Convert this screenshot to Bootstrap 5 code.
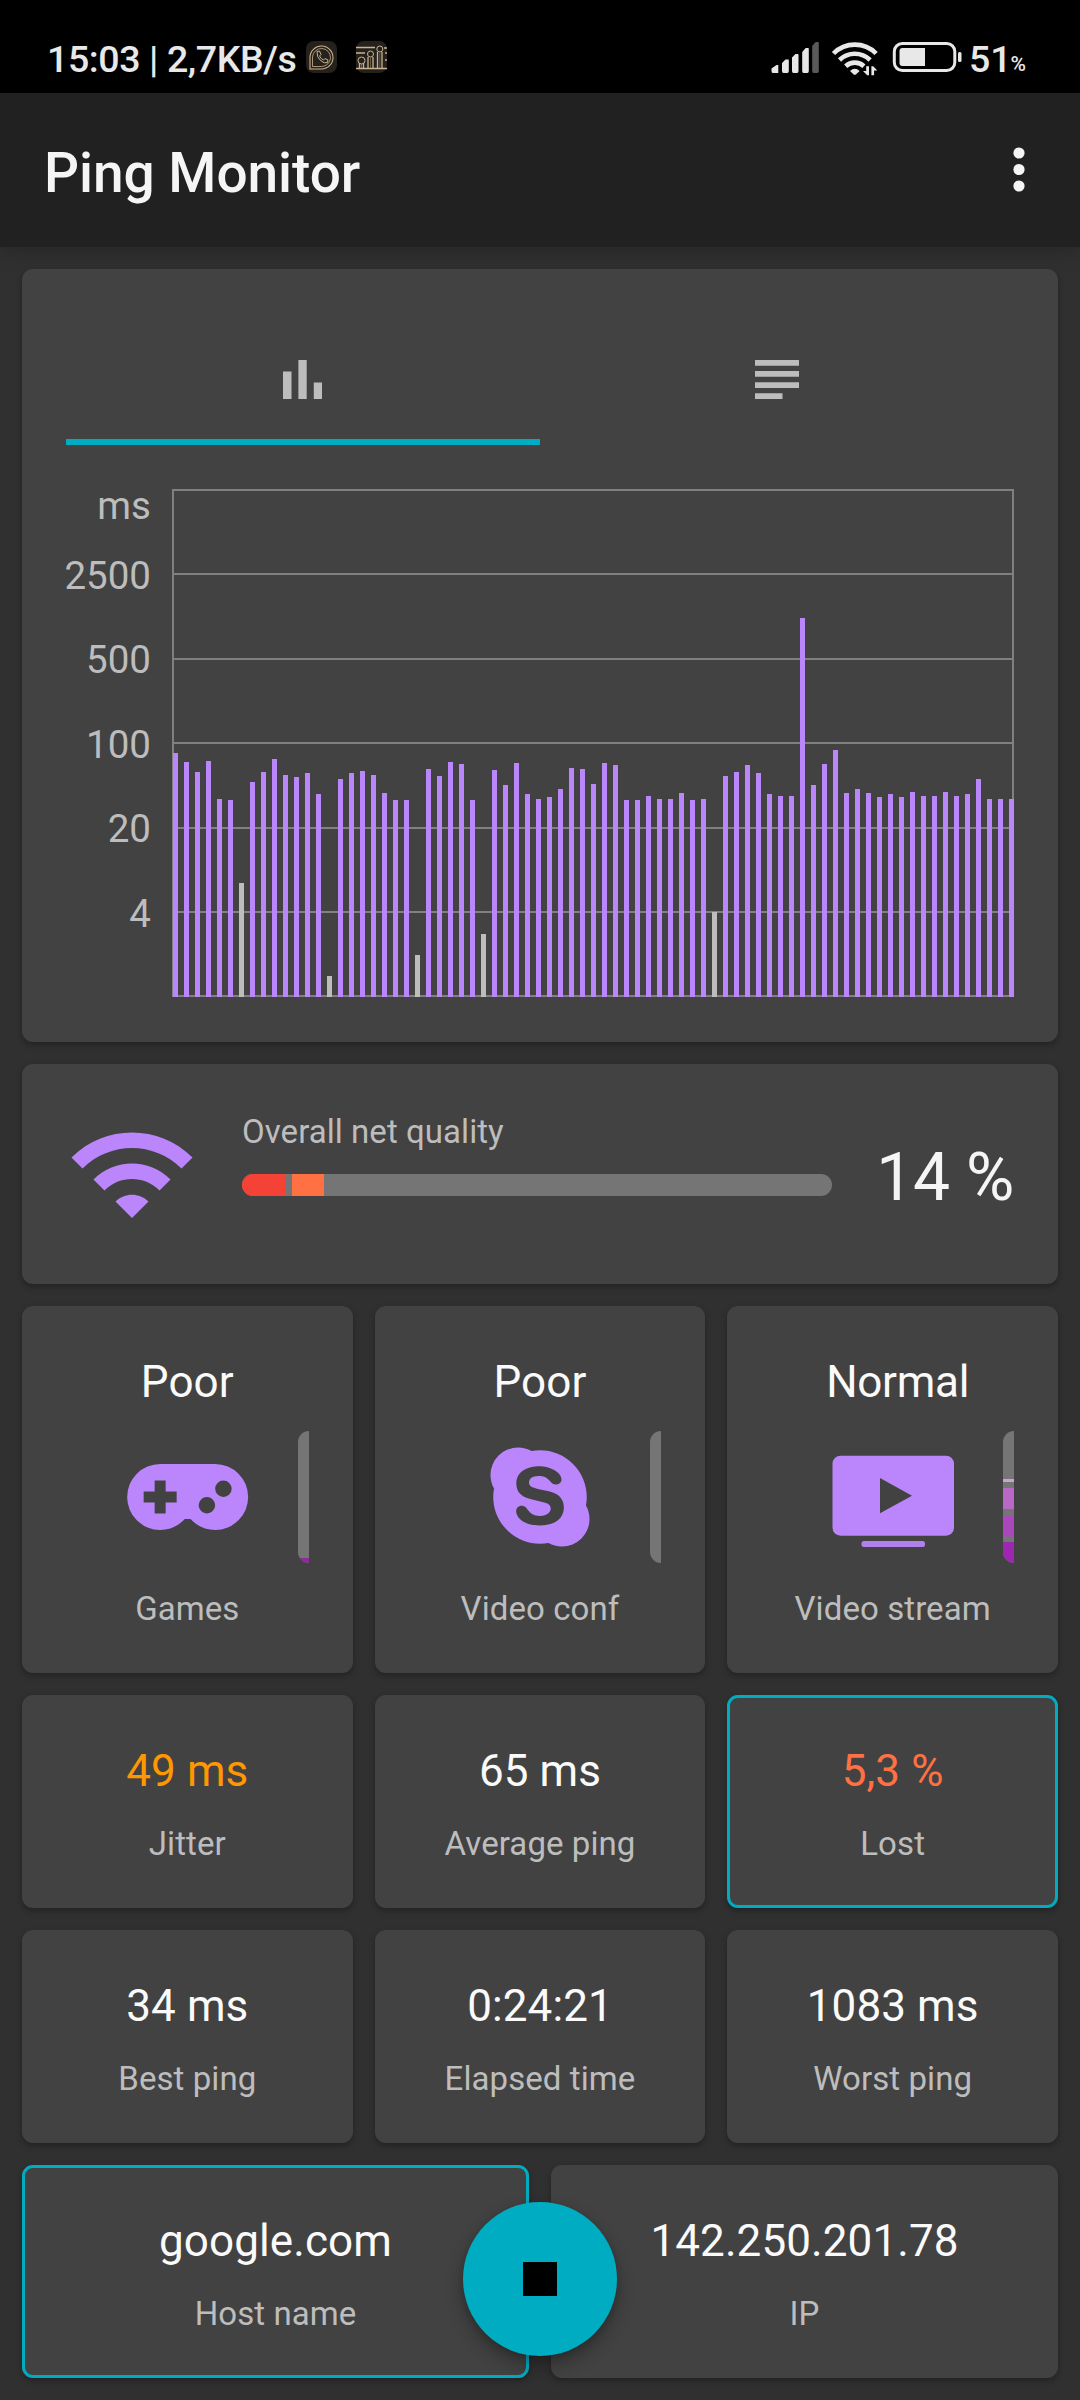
<!DOCTYPE html>
<html lang="en">
<head>
<meta charset="utf-8">
<meta name="viewport" content="width=device-width, initial-scale=1">
<title>Ping Monitor</title>
<link href="https://cdn.jsdelivr.net/npm/bootstrap@5.3.0/dist/css/bootstrap.min.css" rel="stylesheet">
<style>
  :root { --accent: #00acc1; --violet: #bb86fc; --surface: #424242; --muted: #bdbdbd; --track: #757575; }
  html, body { height: 100%; }
  body { background: #303030; color: #fafafa; font-family: Roboto, "Liberation Sans", sans-serif; overflow: hidden; }
  svg { display: block; }
  .screen { width: 1080px; height: 2400px; overflow: hidden; }

  .status { height: 93px; background: #000; color: #e8e8e8; padding: 36px 54px 0 47px; font-size: 37.5px; font-weight: 500; line-height: 46px; }
  .status-clock { letter-spacing: -.4px; }
  .status-icons { margin: 5px 0 0 9px; }
  .status-pct { font-size: 21px; line-height: 25px; margin: 16px 0 0 -1px; }
  .appbar { height: 154px; background: #212121; padding: 0 55px 0 44px; box-shadow: 0 2px 20px rgba(0,0,0,.25); --bs-navbar-padding-y: 0; }
  .appbar h1 { font-size: 55px; font-weight: 500; line-height: 64px; letter-spacing: -.05px; color: #f5f5f5; margin-top: 5px; }

  .board { padding: 22px; display: flex; flex-direction: column; gap: 22px; }
  .board > .row { --bs-gutter-x: 22px; }
  .tile { --bs-card-bg: var(--surface); --bs-card-border-width: 0; --bs-card-border-radius: 11px; --bs-card-color: #fafafa; box-shadow: 0 3px 6px rgba(0,0,0,.28); }
  .tile-on::after { content: ""; position: absolute; inset: 0; border: 3px solid var(--accent); border-radius: 11px; }

  .tile-chart { height: 773px; padding: 44px 44px 45px; }
  .chart-tabs { height: 132px; }
  .chart-tabs .nav-link { border-radius: 0; height: 132px; padding: 6px 0 0; border-bottom: 6px solid transparent; }
  .chart-tabs .nav-link.active { background: none; border-color: var(--accent); }
  .axis { width: 95px; margin: 32px 0 0 -10px; font-size: 38.5px; line-height: 46px; color: var(--muted); text-align: right; white-space: nowrap; }
  .axis div { height: 84.4px; }
  .axis div:first-child { height: 70px; margin-top: 6px; }
  .plot { width: 842px; height: 508px; margin: 44px 0 0 21px; border: 2px solid #808080; flex: none; }
  .plot-lines { position: absolute; inset: 0; }
  .plot-lines hr { margin: 82.4px 0 0; border: 0; height: 2px; background: #808080; opacity: 1; }
  .plot-bars { position: absolute; inset: -2px -2px -2px -1px; display: flex; align-items: flex-end; gap: 6px; }
  .plot-bars span { width: 5px; flex: none; background: var(--violet); }
  .plot-bars .miss { background: var(--muted); }

  .tile-net { height: 220px; padding: 44px; }
  .net-label { font-size: 33px; line-height: 39px; letter-spacing: .05px; color: var(--muted); padding-top: 4px; margin-bottom: 23px; }
  .meter { --bs-progress-height: 22px; --bs-progress-bg: var(--track); --bs-progress-border-radius: 11px; width: 590px; }
  .net-value { font-size: 66px; line-height: 78px; letter-spacing: -.3px; color: #f5f5f5; padding-top: 31px; }

  .tile-service { height: 367px; padding-top: 50px; text-align: center; }
  .tile-stat { height: 213px; padding-top: 50px; text-align: center; }
  .figure-main { font-size: 44px; line-height: 52px; letter-spacing: .1px; }
  .figure-shift { padding-left: 10px; letter-spacing: -.3px; }
  .figure-sub { font-size: 33px; line-height: 39px; letter-spacing: .08px; color: var(--muted); }
  .tile-service .figure-main { margin-bottom: 23px; }
  .tile-stat .figure-sub { margin-top: 27px; }
  .tile-service .figure-sub { margin-top: 26px; }
  .level { position: absolute; right: 44px; top: 125px; width: 11px; height: 132px; background: var(--track); border-radius: 11px 0 0 11px; overflow: hidden; }
  .fab { position: fixed; left: 463px; top: 2202px; width: 154px; height: 154px; background: var(--accent); border: 0; padding: 0; z-index: 5; box-shadow: 0 9px 18px rgba(0,0,0,.3), 0 2px 8px rgba(0,0,0,.15); }
  .fab i { width: 34px; height: 34px; background: #000; }
  .warn { color: #ff9800; } .alarm { color: #ff7043; }
</style>
</head>
<body>
<div class="screen">
  <header>
    <div class="status d-flex align-items-start">
      <span class="status-clock">15:03 | 2,7KB/s</span>
      <svg class="status-icons" width="84" height="34" viewBox="0 0 84 34" fill="none" stroke="#c9b38c">
        <rect x="1" y="0" width="31" height="32" rx="8" fill="#25221e" stroke="none"/>
        <path d="M5 28V16A11.5 11.5 0 1 1 16.5 28Z" stroke-width="1.1"/>
        <path d="M7.500 25.500V16A9 9 0 1 1 16.500 25.500Z" stroke-width=".8"/>
        <path d="M12 10.500l2.500-.5 1.500 3.500-1.500 1.500q1.500 3 4 4l1.500-1.500 3 1.500-.5 2.500q-3 1.500-7-2t-3.500-9z" stroke-width="1"/>
        <rect x="51" y="0" width="31" height="32" rx="8" fill="#25221e" stroke="none"/>
        <path d="M51 6.500h19M51 12h9M51 27.500h31M79 7h3M80 12h2M80 19h2M54.500 27v-5M58.500 27v-5M63 27v-11M68 27v-11M72.500 27v-16M77 27v-16" stroke-width="1.300"/>
        <path d="M56.500 27v-4M65.500 27v-10M74.800 27v-15" stroke-width=".7" opacity=".6"/>
        <circle cx="56.500" cy="19.500" r="3.500"/><circle cx="65.500" cy="13" r="3"/><circle cx="74.800" cy="8" r="3"/>
      </svg>
      <div class="ms-auto d-flex">
        <svg width="199" height="40" viewBox="770 36 199 40" fill="#e8e8e8">
          <path d="M771.500 71v-2.500l5-3.500h1.800v8h-5.500q-1.300 0-1.300-2zM782 71v-8l3.500-3.500h2.800q.5 0 .5.800v10.700q0 2-1.500 2h-3.800q-1.500 0-1.500-2zM792 71v-13.500l3.500-3.500h2.300q.7 0 .7.800v16.200q0 2-1.500 2h-3.500q-1.500 0-1.500-2zM802.200 71v-19l3.500-4h2.300q.8 0 .8.800v22.200q0 2-1.500 2h-3.600q-1.500 0-1.500-2z"/>
          <path fill="#5a5a5a" d="M812.200 71v-25l3.500-4h2.300q.8 0 .8.800v28.200q0 2-1.500 2h-3.600q-1.500 0-1.500-2z"/>
          <g fill="none" stroke="#e8e8e8" stroke-width="4.600">
            <path d="M833.500 53.500a30 30 0 0 1 42.600 0"/><path d="M839.500 60a22 22 0 0 1 30.600 0"/><path d="M845.700 66.200a13.500 13.500 0 0 1 18.200 0"/>
          </g>
          <path d="M850 71q4.800-4.500 9.600 0l-3.400 3.200q-1.400 1.200-2.800 0z"/>
          <path d="M863 71h3.200v-4.700h2.800v9h-1.800zM877.300 70.500h-3.200v4.700h-2.700v-9h1.800z"/>
          <rect x="894.300" y="43.500" width="60.500" height="27" rx="8" fill="none" stroke="#e8e8e8" stroke-width="3"/>
          <path d="M902.500 48h22.500v18h-22.500q-3 0-3-3v-12q0-3 3-3z"/>
          <rect x="958" y="52" width="3.500" height="10" rx="1.500"/>
        </svg>
        <span>51</span><span class="status-pct">%</span>
      </div>
    </div>
    <nav class="appbar navbar d-flex flex-nowrap align-items-center justify-content-between position-relative">
      <h1 class="mb-0">Ping Monitor</h1>
      <svg width="12" height="46" viewBox="0 0 12 46" fill="#f5f5f5"><circle cx="6" cy="6" r="5.600"/><circle cx="6" cy="22.500" r="5.600"/><circle cx="6" cy="39" r="5.600"/></svg>
    </nav>
  </header>

  <main class="board">
    <section class="card tile tile-chart">
      <ul class="nav nav-pills nav-fill chart-tabs flex-nowrap">
        <li class="nav-item w-50"><a class="nav-link active d-flex align-items-center justify-content-center" href="#" aria-label="Chart">
          <svg width="40" height="39" viewBox="0 0 40 39" fill="#bdbdbd"><path d="M0 11.500h8.500V39H0zM15.400 0h8.300v39h-8.300zM30.800 22.500h8.200V39h-8.200z"/></svg></a></li>
        <li class="nav-item w-50"><a class="nav-link d-flex align-items-center justify-content-center" href="#" aria-label="Log">
          <svg width="44" height="39" viewBox="0 0 44 39" fill="#bdbdbd"><path d="M0 0h44v5.700H0zM0 11.100h44v5.700H0zM0 22.200h44v5.700H0zM0 33.300h27.500V39H0z"/></svg></a></li>
      </ul>
      <div class="d-flex">
        <div class="axis"><div>ms</div><div>2500</div><div>500</div><div>100</div><div>20</div><div>4</div></div>
        <div class="plot position-relative">
          <div class="plot-lines"><hr><hr><hr><hr><hr></div>
          <div class="plot-bars" id="bars"></div>
        </div>
      </div>
    </section>

    <section class="card tile tile-net flex-row">
      <svg width="132" height="132" viewBox="0 0 24 24" fill="#bb86fc"><path d="M1 9l2 2c4.970-4.970 13.030-4.970 18 0l2-2C16.930 2.930 7.080 2.930 1 9zm8 8l3 3 3-3c-1.650-1.660-4.340-1.660-6 0zm-4-4l2 2c2.760-2.760 7.240-2.760 10 0l2-2C15.140 9.140 8.870 9.140 5 13z"/></svg>
      <div style="margin-left:44px">
        <div class="net-label">Overall net quality</div>
        <div class="progress meter">
          <div class="progress-bar" style="width:44px;background:#f44336"></div>
          <div class="progress-bar" style="width:32px;margin-left:6px;background:#ff7043"></div>
        </div>
      </div>
      <div class="net-value ms-auto text-nowrap">14 %</div>
    </section>

    <div class="row">
      <div class="col-4"><div class="card tile tile-service">
        <div class="figure-main">Poor</div>
        <svg class="mx-auto" width="132" height="132" viewBox="0 0 24 24" fill="#bb86fc"><path transform="translate(.12)" d="M7,6H17A6,6 0 0,1 23,12A6,6 0 0,1 17,18C15.220,18 13.630,17.230 12.530,16H11.470C10.370,17.230 8.780,18 7,18A6,6 0 0,1 1,12A6,6 0 0,1 7,6M6,9V11H4V13H6V15H8V13H10V11H8V9H6M15.500,12A1.500,1.500 0 0,0 14,13.500A1.500,1.500 0 0,0 15.500,15A1.500,1.500 0 0,0 17,13.500A1.500,1.500 0 0,0 15.500,12M18.500,9A1.500,1.500 0 0,0 17,10.500A1.500,1.500 0 0,0 18.500,12A1.500,1.500 0 0,0 20,10.500A1.500,1.500 0 0,0 18.500,9Z"/></svg>
        <div class="level"><svg width="11" height="132"><path d="M0 127h11v5H0z" fill="#8e2c9c"/></svg></div>
        <div class="figure-sub">Games</div>
      </div></div>
      <div class="col-4"><div class="card tile tile-service">
        <div class="figure-main">Poor</div>
        <svg class="mx-auto" width="132" height="132" viewBox="0 0 24 24" fill="#bb86fc"><path d="M18,6C20.070,8.040 20.850,10.890 20.360,13.550C20.770,14.270 21,15.110 21,16A5,5 0 0,1 16,21C15.110,21 14.270,20.770 13.550,20.360C10.890,20.850 8.040,20.070 6,18C3.930,15.960 3.150,13.110 3.640,10.450C3.230,9.730 3,8.890 3,8A5,5 0 0,1 8,3C8.890,3 9.730,3.230 10.450,3.640C13.110,3.150 15.960,3.930 18,6M12.040,17.160C14.910,17.160 16.340,15.780 16.340,13.920C16.340,12.730 15.780,11.460 13.610,10.970L11.620,10.530C10.860,10.360 10,10.130 10,9.420C10,8.700 10.600,8.200 11.700,8.200C13.930,8.200 13.720,9.730 14.830,9.730C15.410,9.730 15.910,9.390 15.910,8.800C15.910,7.430 13.720,6.400 11.860,6.400C9.850,6.400 7.700,7.260 7.700,9.540C7.700,10.640 8.090,11.810 10.250,12.350L12.940,13.030C13.750,13.230 13.950,13.680 13.950,14.100C13.950,14.780 13.270,15.450 12.040,15.450C9.630,15.450 9.960,13.600 8.670,13.600C8.090,13.600 7.670,14 7.670,14.570C7.670,15.680 9,17.160 12.040,17.160Z"/></svg>
        <div class="level"></div>
        <div class="figure-sub">Video conf</div>
      </div></div>
      <div class="col-4"><div class="card tile tile-service">
        <div class="figure-main figure-shift">Normal</div>
        <svg class="mx-auto" width="132" height="132" viewBox="0 0 132 132" fill="#bb86fc"><rect x="5.500" y="24.700" width="121.500" height="80" rx="8"/><path d="M53 47l32 17.700-32 17.600z" fill="#424242"/><rect x="34.500" y="110" width="63.500" height="6" rx="2.500" opacity=".92"/></svg>
        <div class="level"><svg width="11" height="132"><path d="M0 48h11v3H0z" fill="#cba3d3"/><path d="M0 57h11v21H0z" fill="#ba68c8"/><path d="M0 85h11v20.500H0z" fill="#ab47bc"/><path d="M0 111h11v21H0z" fill="#9c27b0"/></svg></div>
        <div class="figure-sub">Video stream</div>
      </div></div>
    </div>

    <div class="row">
      <div class="col-4"><div class="card tile tile-stat"><div class="figure-main warn">49 ms</div><div class="figure-sub">Jitter</div></div></div>
      <div class="col-4"><div class="card tile tile-stat"><div class="figure-main">65 ms</div><div class="figure-sub">Average ping</div></div></div>
      <div class="col-4"><div class="card tile tile-stat tile-on"><div class="figure-main alarm">5,3 %</div><div class="figure-sub">Lost</div></div></div>
    </div>
    <div class="row">
      <div class="col-4"><div class="card tile tile-stat"><div class="figure-main">34 ms</div><div class="figure-sub">Best ping</div></div></div>
      <div class="col-4"><div class="card tile tile-stat"><div class="figure-main">0:24:21</div><div class="figure-sub">Elapsed time</div></div></div>
      <div class="col-4"><div class="card tile tile-stat"><div class="figure-main">1083 ms</div><div class="figure-sub">Worst ping</div></div></div>
    </div>
    <div class="row">
      <div class="col-6"><div class="card tile tile-stat tile-on"><div class="figure-main">google.com</div><div class="figure-sub">Host name</div></div></div>
      <div class="col-6"><div class="card tile tile-stat"><div class="figure-main">142.250.201.78</div><div class="figure-sub">IP</div></div></div>
    </div>
  </main>

  <button class="fab btn rounded-circle d-flex align-items-center justify-content-center" type="button" aria-label="Stop"><i></i></button>
</div>

<script src="https://cdn.jsdelivr.net/npm/bootstrap@5.3.0/dist/js/bootstrap.bundle.min.js"></script>
<script>
  // Bar heights in pixels; a negative value is a lost packet, drawn grey.
  const samples = [244,235,225,236,198,197,-114,215,225,238,222,220,224,203,-21,218,224,226,222,204,197,197,-42,228,221,235,233,197,-63,227,212,234,203,198,200,208,229,228,213,234,232,197,197,201,198,198,204,197,198,-85,221,225,232,224,203,201,201,379,212,233,247,204,208,204,200,203,200,205,201,201,205,201,203,218,198,198,198];
  document.getElementById('bars').innerHTML = samples
    .map(v => `<span${v < 0 ? ' class="miss"' : ''} style="height:${Math.abs(v)}px"></span>`).join('');
</script>
</body>
</html>
